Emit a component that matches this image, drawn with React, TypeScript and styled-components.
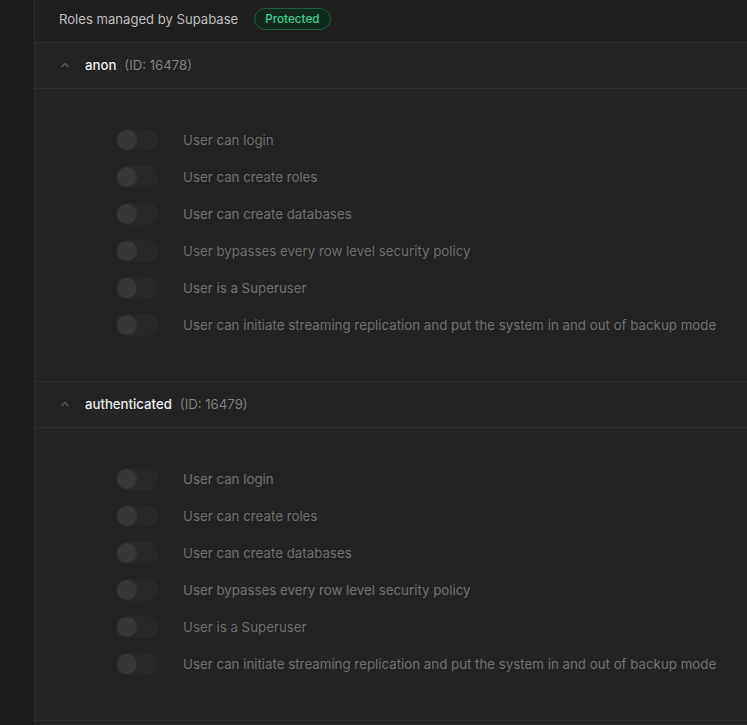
import React from 'react';
import styled, { createGlobalStyle } from 'styled-components';

const GlobalStyles = createGlobalStyle`
  html, body {
    margin: 0;
    padding: 0;
    background: #1c1c1c;
  }
  body {
    font-family: Inter, "Noto Sans", "Liberation Sans", sans-serif;
    -webkit-font-smoothing: antialiased;
  }
`

const Page = styled.div`
  display: flex;
  width: 100%;
  min-height: 725px;
`

const Sider = styled.aside`
  width: 34px;
  flex-shrink: 0;
  background-color: #1c1c1c;
  border-right: 1px solid #2c2c2c;
`

const Panel = styled.main`
  flex: 1;
  display: flex;
  flex-direction: column;
  background-color: #232323;
`

const TopBar = styled.header`
  height: 43px;
  box-sizing: border-box;
  display: flex;
  align-items: center;
  gap: 16px;
  padding: 0 24px 5px;
  background-color: #1f1f1f;
  border-bottom: 1px solid #2e2e2e;
`

const TopTitle = styled.span`
  font-size: 13.1px;
  color: #bdbdbd;
`

const Badge = styled.span`
  height: 20px;
  display: inline-flex;
  align-items: center;
  padding: 0 10px;
  border-radius: 999px;
  border: 1px solid #1b5e3b;
  background-color: #112a1d;
  color: #3ecf8e;
  font-size: 11.7px;
  font-weight: 500;
`

const RoleHeader = styled.div`
  height: 46px;
  box-sizing: border-box;
  display: flex;
  align-items: center;
  padding: 0 24px 2px;
  border-bottom: 1px solid #2e2e2e;
`

const Chevron = styled.svg`
  width: 12px;
  height: 12px;
  margin-right: 14px;
  color: #595959;
`

const RoleName = styled.span`
  font-size: 13.2px;
  font-weight: 500;
  color: #ededed;
`

const RoleId = styled.span`
  margin-left: 8px;
  font-size: 13.2px;
  color: #7e7e7e;
`

const RoleBody = styled.div`
  display: flex;
  flex-direction: column;
  gap: 15px;
  padding: 40px 0 45px 81px;
  border-bottom: 1px solid #2e2e2e;
`

const Option = styled.div`
  display: flex;
  align-items: center;
  gap: 25px;
  height: 22px;
`

const Track = styled.div`
  width: 42px;
  height: 22px;
  flex-shrink: 0;
  border-radius: 11px;
  background-color: #282828;
  display: flex;
  align-items: center;
  padding: 1px;
  box-sizing: border-box;
`

const Knob = styled.div`
  width: 20px;
  height: 20px;
  border-radius: 50%;
  background-color: #363636;
`

const OptionLabel = styled.span`
  font-size: 13.3px;
  color: #6e6e6e;
  white-space: nowrap;
`

const privileges = [
  'User can login',
  'User can create roles',
  'User can create databases',
  'User bypasses every row level security policy',
  'User is a Superuser',
  'User can initiate streaming replication and put the system in and out of backup mode',
];

const roles = [
  { name: 'anon', id: 16478 },
  { name: 'authenticated', id: 16479 },
];

function Role({ name, id }: { name: string; id: number }) {
  return (
    <section>
      <RoleHeader>
        <Chevron viewBox="0 0 24 24" fill="none" stroke="currentColor" strokeWidth="2.5" strokeLinecap="round" strokeLinejoin="round">
          <path d="M6 15l6-6 6 6" />
        </Chevron>
        <RoleName>{name}</RoleName>
        <RoleId>(ID: {id})</RoleId>
      </RoleHeader>
      <RoleBody>
        {privileges.map((p) => (
          <Option key={p}>
            <Track>
              <Knob />
            </Track>
            <OptionLabel>{p}</OptionLabel>
          </Option>
        ))}
      </RoleBody>
    </section>
  );
}

export default function App() {
  return (
    <Page>
      <GlobalStyles />
      <Sider />
      <Panel>
        <TopBar>
          <TopTitle>Roles managed by Supabase</TopTitle>
          <Badge>Protected</Badge>
        </TopBar>
        {roles.map((r) => (
          <Role key={r.id} name={r.name} id={r.id} />
        ))}
      </Panel>
    </Page>
  );
}
